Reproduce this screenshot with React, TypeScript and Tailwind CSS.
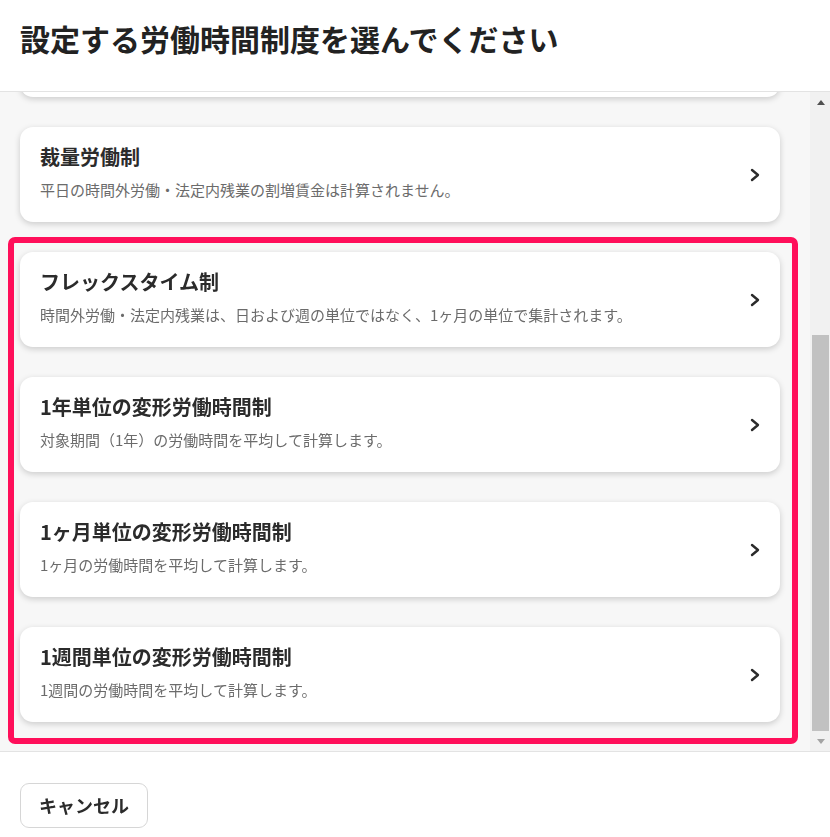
import { useLayoutEffect, useRef } from "react";

type Option = { title: string; desc: string };

// 上の3件はスクロールで隠れている
const HIDDEN: Option[] = [
  {
    title: "通常の労働時間制",
    desc: "1日8時間・週40時間を超えた労働時間が時間外労働として計算されます。",
  },
  {
    title: "管理監督者",
    desc: "時間外労働・休日労働の割増賃金は計算されません。",
  },
  {
    title: "事業場外みなし労働時間制",
    desc: "所定労働時間を労働したものとみなして計算します。",
  },
  {
    title: "裁量労働制",
    desc: "平日の時間外労働・法定内残業の割増賃金は計算されません。",
  },
];

const MARKED: Option[] = [
  {
    title: "フレックスタイム制",
    desc: "時間外労働・法定内残業は、日および週の単位ではなく、1ヶ月の単位で集計されます。",
  },
  {
    title: "1年単位の変形労働時間制",
    desc: "対象期間（1年）の労働時間を平均して計算します。",
  },
  {
    title: "1ヶ月単位の変形労働時間制",
    desc: "1ヶ月の労働時間を平均して計算します。",
  },
  {
    title: "1週間単位の変形労働時間制",
    desc: "1週間の労働時間を平均して計算します。",
  },
];

function Chevron() {
  return (
    <svg width="10" height="14" viewBox="0 0 10 14" fill="none" className="shrink-0">
      <polyline
        points="2,2 8,7 2,12"
        stroke="#2b2b2b"
        strokeWidth="2.4"
        strokeLinecap="round"
        strokeLinejoin="round"
      />
    </svg>
  );
}

function OptionCard({ o }: { o: Option }) {
  return (
    <button className="flex h-[95px] w-full items-center justify-between rounded-[13px] bg-white pl-5 pr-[20px] text-left shadow-[0_2px_6px_rgba(0,0,0,0.18)]">
      <div className="flex h-full flex-col pt-4">
        <span className="text-[20px] font-bold leading-[28px] text-[#2b2b2b]">{o.title}</span>
        <span className="mt-[8px] text-[15px] leading-[22px] text-[#6b6b6b]">{o.desc}</span>
      </div>
      <Chevron />
    </button>
  );
}

function Scrollbar() {
  return (
    <div className="flex w-5 shrink-0 flex-col bg-[#f1f1f1]">
      <div className="flex h-[21px] items-center justify-center pl-[2px]">
        <div className="h-0 w-0 border-x-[4px] border-b-[5px] border-x-transparent border-b-[#505050]" />
      </div>
      <div className="flex flex-1 flex-col justify-end pl-[2px] pr-[1px]">
        <div className="h-[396px] bg-[#c1c1c1]" />
      </div>
      <div className="flex h-[20px] items-center justify-center pl-[2px]">
        <div className="h-0 w-0 border-x-[4px] border-t-[5px] border-x-transparent border-t-[#a3a3a3]" />
      </div>
    </div>
  );
}

export default function App() {
  const scrollRef = useRef<HTMLDivElement>(null);

  useLayoutEffect(() => {
    const el = scrollRef.current;
    if (el) el.scrollTop = el.scrollHeight;
  }, []);

  return (
    <div
      className="flex h-[837px] w-[830px] flex-col overflow-hidden bg-white"
      style={{ fontFamily: '"Noto Sans CJK JP", "Noto Sans", sans-serif' }}
    >
      <header className="h-[92px] shrink-0 border-b border-[#e3e3e3] pl-5 pt-[18px]">
        <h1 className="text-[30px] font-bold leading-[40px] text-[#222]">
          設定する労働時間制度を選んでください
        </h1>
      </header>

      <div className="flex h-[659px] shrink-0">
        <div
          ref={scrollRef}
          className="flex-1 overflow-y-auto bg-[#f7f7f7] [scrollbar-width:none] [&::-webkit-scrollbar]:hidden"
        >
          <div className="flex flex-col gap-[30px] pb-[29px] pl-5 pr-[30px] pt-[30px]">
            {HIDDEN.map((o) => (
              <OptionCard key={o.title} o={o} />
            ))}
            <div className="relative flex flex-col gap-[30px]">
              {MARKED.map((o) => (
                <OptionCard key={o.title} o={o} />
              ))}
              <div className="pointer-events-none absolute -bottom-[22px] -left-3 -right-[18px] -top-[15px] rounded-[7px] border-[6px] border-[#ff0f5a]" />
            </div>
          </div>
        </div>
        <Scrollbar />
      </div>

      <footer className="shrink-0 border-t border-[#e3e3e3] pl-5 pt-[31px]">
        <button className="h-[45px] w-[128px] rounded-[9px] border border-[#d6d6d6] bg-white text-[18px] font-bold text-[#2b2b2b]">
          キャンセル
        </button>
      </footer>
    </div>
  );
}
